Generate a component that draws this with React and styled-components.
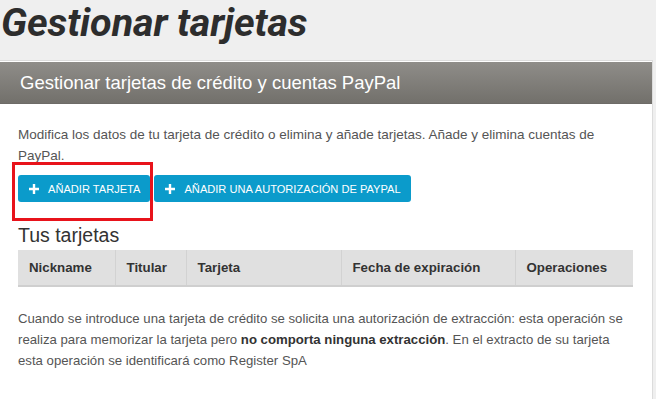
import styled, { createGlobalStyle } from 'styled-components';

const Global = createGlobalStyle`
  html, body {
    margin: 0;
    padding: 0;
    background: #efefef;
  }
  body {
    font-family: "Liberation Sans", Arial, sans-serif;
    color: #555;
  }
`;

const Page = styled.div`
  width: 656px;
  height: 399px;
  overflow: hidden;
  padding-right: 3px;
  box-sizing: border-box;
`;

const Title = styled.h1`
  margin: 0;
  height: 60px;
  padding: 0 0 0 1px;
  box-sizing: border-box;
  font-family: Roboto, "Liberation Sans", sans-serif;
  font-style: italic;
  font-weight: 700;
  font-size: 39.5px;
  line-height: 46px;
  letter-spacing: -0.1px;
  color: #2d2d2d;
`;

const Panel = styled.section`
  background: #fff;
  border: 1px solid #dcdcdc;
  border-left: none;
  padding: 1px 0 0 0;
  min-height: 400px;
`;

const PanelHeader = styled.h2`
  margin: 0;
  height: 41px;
  display: flex;
  align-items: center;
  padding-left: 20px;
  background: linear-gradient(#8f8d89, #72706b);
  border-bottom: 1px solid #6d6b67;
  font-weight: 400;
  font-size: 18.5px;
  color: #fff;
`;

const Body = styled.div`
  padding: 20px 19px 0 18px;
`;

const Text = styled.p`
  margin: 0;
  font-size: ${p => p.$size || 13.5}px;
  line-height: 21px;
  color: #555;
  b {
    color: #333;
  }
`;

const Buttons = styled.div`
  display: flex;
  gap: 4px;
  margin-top: 9px;
`;

const Highlight = styled.span`
  position: relative;
  display: flex;
  &::after {
    content: '';
    position: absolute;
    left: -6px;
    top: -13px;
    right: -3px;
    bottom: -19px;
    border: 3px solid #e8131b;
    pointer-events: none;
  }
`;

const Button = styled.button`
  display: flex;
  align-items: center;
  gap: 9px;
  height: 27px;
  padding: 0 10px 0 11px;
  background: #0b9bcb;
  border: none;
  border-radius: 3px;
  color: #fff;
  font-family: "Liberation Sans", Arial, sans-serif;
  font-size: 11.1px;
  white-space: nowrap;
  cursor: pointer;
`;

const Plus = () => (
  <svg width="10" height="10" viewBox="0 0 10 10">
    <path d="M3.8 0h2.4v3.8H10v2.4H6.2V10H3.8V6.2H0V3.8h3.8z" fill="#fff" />
  </svg>
);

const SubTitle = styled.h3`
  margin: 22px 0 0;
  font-weight: 400;
  font-size: 19.5px;
  line-height: 22px;
  color: #333;
`;

const Table = styled.table`
  margin-top: 4px;
  width: 615px;
  border-collapse: collapse;
  table-layout: fixed;
`;

const Th = styled.th`
  box-sizing: border-box;
  width: ${p => p.$w}px;
  height: 36px;
  padding: 0 0 0 11px;
  text-align: left;
  background: #e0e0e0;
  border-left: 1px solid #d2d2d2;
  border-bottom: 2px solid #cfcfcf;
  font-size: 13.3px;
  font-weight: 700;
  color: #333;
  &:first-child {
    border-left: none;
  }
`;

const Note = styled(Text)`
  margin-top: 21px;
`;

export default function App() {
  return (
    <Page>
      <Global />
      <Title>Gestionar tarjetas</Title>
      <Panel>
        <PanelHeader>Gestionar tarjetas de crédito y cuentas PayPal</PanelHeader>
        <Body>
          <Text>
            Modifica los datos de tu tarjeta de crédito o elimina y añade tarjetas. Añade y elimina cuentas de
            PayPal.
          </Text>
          <Buttons>
            <Highlight>
              <Button><Plus />AÑADIR TARJETA</Button>
            </Highlight>
            <Button><Plus />AÑADIR UNA AUTORIZACIÓN DE PAYPAL</Button>
          </Buttons>
          <SubTitle>Tus tarjetas</SubTitle>
          <Table>
            <thead>
              <tr>
                <Th $w={97}>Nickname</Th>
                <Th $w={71}>Titular</Th>
                <Th $w={155}>Tarjeta</Th>
                <Th $w={174}>Fecha de expiración</Th>
                <Th $w={118}>Operaciones</Th>
              </tr>
            </thead>
          </Table>
          <Note $size={13.2}>
            Cuando se introduce una tarjeta de crédito se solicita una autorización de extracción: esta operación se
            realiza para memorizar la tarjeta pero <b>no comporta ninguna extracción</b>. En el extracto de su tarjeta
            esta operación se identificará como Register SpA
          </Note>
        </Body>
      </Panel>
    </Page>
  );
}
